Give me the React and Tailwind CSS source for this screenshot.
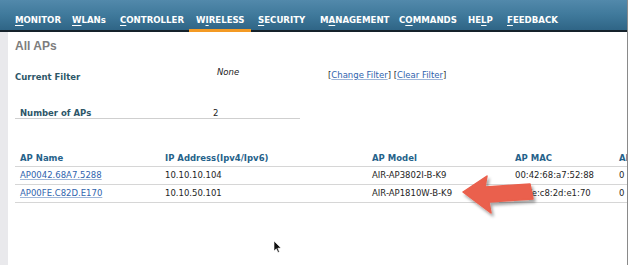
import React from "react";

const NAV = [
  { pre: "", u: "M", post: "ONITOR", w: "w-[57px]" },
  { pre: "", u: "W", post: "LANs", w: "w-[48px]" },
  { pre: "", u: "C", post: "ONTROLLER", w: "w-[76px]" },
  { pre: "W", u: "I", post: "RELESS", w: "w-[62px]", active: true },
  { pre: "", u: "S", post: "ECURITY", w: "w-[62px]" },
  { pre: "M", u: "A", post: "NAGEMENT", w: "w-[79px]" },
  { pre: "C", u: "O", post: "MMANDS", w: "w-[69px]" },
  { pre: "HE", u: "L", post: "P", w: "w-[39px]" },
  { pre: "", u: "F", post: "EEDBACK", w: "w-[70px]" },
];

const ROWS = [
  ["AP0042.68A7.5288", "10.10.10.104", "AIR-AP3802I-B-K9", "00:42:68:a7:52:88", "0"],
  ["AP00FE.C82D.E170", "10.10.50.101", "AIR-AP1810W-B-K9", "00:fe:c8:2d:e1:70", "0"],
];

export default function App() {
  return (
    <div className="relative w-[628px] h-[265px] overflow-hidden bg-white flex flex-col border-r border-[#8a8a8a] font-['DejaVu_Sans',Verdana,sans-serif]">
      {/* Nav bar */}
      <div className="h-[32px] shrink-0 flex bg-gradient-to-b from-[#5289ab] via-[#3f799b] to-[#2f6586] border-b-2 border-[#15222b] pl-[8px]">
        {NAV.map((n, i) => (
          <div
            key={i}
            className={`${n.w} shrink-0 h-full pl-[7px] pt-[15px] text-[8.6px] leading-[11px] font-bold text-white whitespace-nowrap ${
              n.active ? "relative" : ""
            }`}
          >
            <span>
              {n.pre}
              <span className="underline decoration-[1px] underline-offset-[2px]">{n.u}</span>
              {n.post}
            </span>
            {n.active && (
              <div className="absolute left-0 right-0 bottom-[-2px] h-[3px] bg-[#f39a24]" />
            )}
          </div>
        ))}
      </div>

      {/* Body */}
      <div className="flex flex-1">
        <div className="w-[8px] shrink-0 bg-[#e9e9ec]" />
        <div className="flex-1 flex flex-col">
          <div className="mt-[6px] pl-[7px] h-[16px] leading-[16px] text-[12px] font-bold text-[#7d7d7d] font-['Liberation_Sans',Arial,sans-serif]">
            All APs
          </div>

          {/* Filter row */}
          <div className="mt-[10px] h-[20px] flex pl-[7px] text-[8.5px] leading-[12px]">
            <div className="w-[202px] mt-[7px] font-bold text-[#2d5668]">Current Filter</div>
            <div className="w-[111px] mt-[2px] italic text-[#222]">None</div>
            <div className="mt-[5px] text-[#333]">
              [<span className="text-[#2f63ae] underline decoration-[#9fb6d8]">Change Filter</span>]{" "}
              [<span className="text-[#2f63ae] underline decoration-[#9fb6d8]">Clear Filter</span>]
            </div>
          </div>

          {/* Number of APs */}
          <div className="mt-[21px] ml-[7px] w-[285px] pt-[2px] h-[14px] border-b border-[#cfcfcf] flex pl-[5px] text-[8.5px] leading-[12px]">
            <div className="w-[193px] font-bold text-[#2d5668]">Number of APs</div>
            <div className="text-[#222]">2</div>
          </div>

          {/* Table */}
          <div className="mt-[31px] ml-[7px] text-[8.5px]">
            <div className="grid grid-cols-[145px_207px_143px_104px_1fr] h-[17px] border-b border-[#d6d6d6] items-center font-bold text-[#25628a]">
              <div className="pl-[5px]">AP Name</div>
              <div className="pl-[5px]">IP Address(Ipv4/Ipv6)</div>
              <div className="pl-[5px]">AP Model</div>
              <div className="pl-[5px]">AP MAC</div>
              <div className="pl-[5px] whitespace-nowrap overflow-hidden">AP Mode</div>
            </div>
            {ROWS.map((r, i) => (
              <div
                key={i}
                className="grid grid-cols-[145px_207px_143px_104px_1fr] h-[18px] border-b border-[#d6d6d6] items-center text-[#1e1e1e]"
              >
                <div className="pl-[5px] text-[#2f63ae] underline decoration-[#9fb6d8]">{r[0]}</div>
                <div className="pl-[5px]">{r[1]}</div>
                <div className="pl-[5px]">{r[2]}</div>
                <div className="pl-[5px]">{r[3]}</div>
                <div className="pl-[5px]">{r[4]}</div>
              </div>
            ))}
          </div>
        </div>
      </div>

      {/* Red annotation arrow */}
      <svg
        className="absolute left-0 top-0 pointer-events-none"
        width="628"
        height="265"
        viewBox="0 0 628 265"
      >
        <defs>
          <filter id="sh" x="-20%" y="-20%" width="140%" height="140%">
            <feDropShadow dx="2" dy="3" stdDeviation="1.6" floodColor="#000" floodOpacity="0.35" />
          </filter>
        </defs>
        <polygon
          points="463,192 487,176 485,187 530,184 533,199 489,202 491,213"
          fill="#ea604d"
          stroke="#ea604d"
          strokeWidth="1.5"
          strokeLinejoin="round"
          filter="url(#sh)"
        />
        {/* mouse cursor */}
        <path
          d="M274 241 L274 251 L276.3 248.8 L278 252.5 L279.4 251.8 L277.8 248.2 L281 248 Z"
          fill="#111"
          stroke="#fff"
          strokeWidth="0.6"
        />
      </svg>
    </div>
  );
}
